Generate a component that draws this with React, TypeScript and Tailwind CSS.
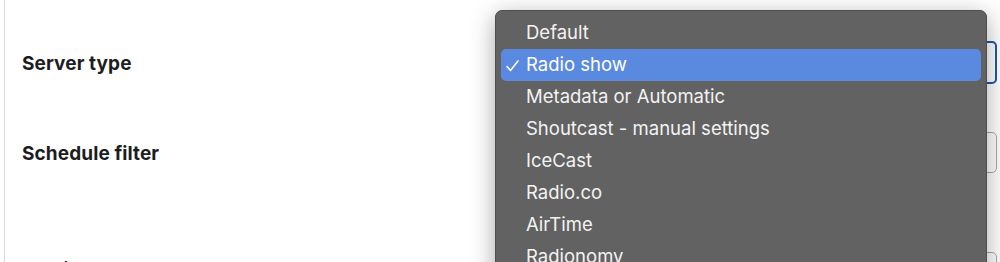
import React from "react";

const items = [
  "Default",
  "Radio show",
  "Metadata or Automatic",
  "Shoutcast - manual settings",
  "IceCast",
  "Radio.co",
  "AirTime",
  "Radionomy",
];

export default function App() {
  return (
    <div
      className="relative h-[262px] w-[1000px] overflow-hidden bg-white"
      style={{ fontFamily: "Inter, 'Noto Sans', sans-serif" }}
    >
      <div className="ml-[4px] flex h-full flex-col border-l border-[#d6d6da] pl-[17px] pr-[3px]">
        <div className="mt-[41px] flex h-[43px] items-center justify-between">
          <span className="mt-[3px] text-[19px] font-bold tracking-[0.1px] text-[#1d1d1f]">Server type</span>
          <div className="h-[43px] w-[450px] rounded-[5px] border-2 border-[#1f58a8] bg-white" />
        </div>
        <div className="mt-[48px] flex h-[41px] items-center justify-between">
          <span className="mt-[4px] text-[19px] font-bold tracking-[0.1px] text-[#1d1d1f]">Schedule filter</span>
          <div className="h-[41px] w-[450px] rounded-[5px] border border-[#a9a9ad] bg-white" />
        </div>
        <div className="mt-[79px] flex h-[41px] items-start justify-between">
          <span className="mt-[4px] text-[19px] font-bold text-[#1d1d1f]">Publish to stream</span>
          <div className="h-[41px] w-[450px] rounded-[5px] border border-[#a9a9ad] bg-white" />
        </div>
      </div>

      <div className="absolute left-[495px] top-[10px] h-[300px] w-[492px] rounded-[7px] border border-[#4e4e4e] bg-[#626262] px-[5px] pt-[6px] shadow-[0_6px_24px_rgba(0,0,0,0.35)]">
        {items.map((it, i) => (
          <div
            key={it}
            className={
              i === 1
                ? "relative flex h-[32px] items-center rounded-[5px] bg-[#5a8ae0] pl-[25px] text-[18.5px] text-white"
                : "relative flex h-[32px] items-center pl-[25px] text-[18.5px] text-[#f3f3f3]"
            }
          >
            {i === 1 && (
              <svg
                className="absolute left-[5px] top-[11px]"
                width="13"
                height="12"
                viewBox="0 0 13 12"
                fill="none"
              >
                <path d="M1 6.5 L4.5 10.5 L12 1" stroke="white" strokeWidth="1.6" strokeLinecap="round" strokeLinejoin="round" />
              </svg>
            )}
            <span className="-mt-[1px]">{it}</span>
          </div>
        ))}
      </div>
    </div>
  );
}
